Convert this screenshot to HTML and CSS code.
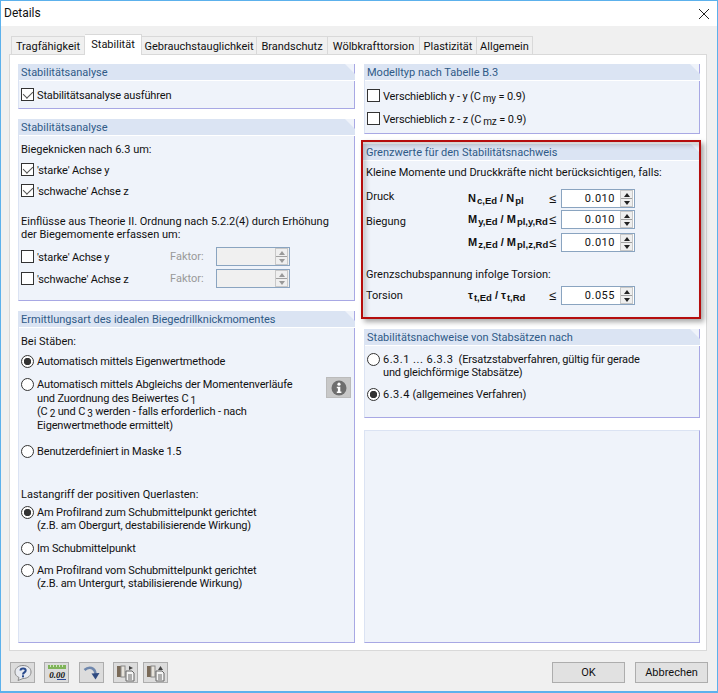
FILE: index.html
```html
<!DOCTYPE html>
<html lang="de">
<head>
    <meta charset="UTF-8">
    <meta name="viewport" content="width=device-width, initial-scale=1.0">
    <title>Details</title>
    <link rel="stylesheet" href="styles.css">
</head>
<body>
    <div class="window">
        <div class="titlebar">
            <span>Details</span>
            <svg class="close-icon" width="12" height="12" viewBox="0 0 12 12"><path d="M1 1 L11 11 M11 1 L1 11" stroke="#222" stroke-width="1" fill="none"/></svg>
        </div>

        <div class="tabs">
            <div class="tab">Tragfähigkeit</div>
            <div class="tab active">Stabilität</div>
            <div class="tab">Gebrauchstauglichkeit</div>
            <div class="tab">Brandschutz</div>
            <div class="tab">Wölbkrafttorsion</div>
            <div class="tab">Plastizität</div>
            <div class="tab">Allgemein</div>
        </div>

        <div class="tab-page">
            <div class="column column-left">
                <section class="card card-run">
                    <h3>Stabilitätsanalyse</h3>
                    <div class="card-body">
                        <label class="opt"><input type="checkbox" checked><span>Stabilitätsanalyse ausführen</span></label>
                    </div>
                </section>

                <section class="card card-buckling">
                    <h3>Stabilitätsanalyse</h3>
                    <div class="card-body">
                        <p class="text t-buckling">Biegeknicken nach 6.3 um:</p>
                        <label class="opt o-strong"><input type="checkbox" checked><span>'starke' Achse y</span></label>
                        <label class="opt o-weak"><input type="checkbox" checked><span>'schwache' Achse z</span></label>
                        <p class="text t-theory">Einflüsse aus Theorie II. Ordnung nach 5.2.2(4) durch Erhöhung<br>der Biegemomente erfassen um:</p>
                        <div class="factor-row f-first">
                            <label class="opt"><input type="checkbox"><span>'starke' Achse y</span></label>
                            <span class="factor-label">Faktor:</span>
                            <div class="spin disabled"><span class="spin-value"></span><div class="spin-btns"><i class="up"></i><i class="down"></i></div></div>
                        </div>
                        <div class="factor-row f-second">
                            <label class="opt"><input type="checkbox"><span>'schwache' Achse z</span></label>
                            <span class="factor-label">Faktor:</span>
                            <div class="spin disabled"><span class="spin-value"></span><div class="spin-btns"><i class="up"></i><i class="down"></i></div></div>
                        </div>
                    </div>
                </section>

                <section class="card card-moment">
                    <h3>Ermittlungsart des idealen Biegedrillknickmomentes</h3>
                    <div class="card-body">
                        <p class="text t-bars">Bei Stäben:</p>
                        <label class="opt o-auto"><input type="radio" name="moment" checked><span>Automatisch mittels Eigenwertmethode</span></label>
                        <div class="info-row">
                            <label class="opt o-abgleich"><input type="radio" name="moment"><span>Automatisch mittels Abgleichs der Momentenverläufe<br>und Zuordnung des Beiwertes C<sub>1</sub><br>(C<sub>2</sub> und C<sub>3</sub> werden - falls erforderlich - nach<br>Eigenwertmethode ermittelt)</span></label>
                            <button class="info-btn"><svg width="16" height="16" viewBox="0 0 16 16"><circle cx="8" cy="8" r="7.5" fill="#6e6e6e"/><circle cx="8" cy="4.2" r="1.6" fill="#fff"/><path d="M5.8 6.8 H9.3 V11.6 H10.4 V13 H5.8 V11.6 H6.9 V8.2 H5.8 Z" fill="#fff"/></svg></button>
                        </div>
                        <label class="opt o-user"><input type="radio" name="moment"><span>Benutzerdefiniert in Maske 1.5</span></label>
                        <p class="text t-load">Lastangriff der positiven Querlasten:</p>
                        <label class="opt o-top"><input type="radio" name="load" checked><span>Am Profilrand zum Schubmittelpunkt gerichtet<br>(z.B. am Obergurt, destabilisierende Wirkung)</span></label>
                        <label class="opt o-centre"><input type="radio" name="load"><span>Im Schubmittelpunkt</span></label>
                        <label class="opt o-bottom"><input type="radio" name="load"><span>Am Profilrand vom Schubmittelpunkt gerichtet<br>(z.B. am Untergurt, stabilisierende Wirkung)</span></label>
                    </div>
                </section>
            </div>

            <div class="column column-right">
                <section class="card card-model">
                    <h3>Modelltyp nach Tabelle B.3</h3>
                    <div class="card-body">
                        <label class="opt o-my"><input type="checkbox"><span>Verschieblich y - y (C<sub>my</sub> = 0.9)</span></label>
                        <label class="opt o-mz"><input type="checkbox"><span>Verschieblich z - z (C<sub>mz</sub> = 0.9)</span></label>
                    </div>
                </section>

                <section class="card card-limits">
                    <h3>Grenzwerte für den Stabilitätsnachweis</h3>
                    <div class="card-body">
                        <p class="text t-small">Kleine Momente und Druckkräfte nicht berücksichtigen, falls:</p>
                        <div class="limits l-first">
                            <span class="l-druck">Druck</span>
                            <span class="formula">N<sub>c,Ed</sub> / N<sub>pl</sub></span>
                            <span class="leq">≤</span>
                            <div class="spin"><span class="spin-value">0.010</span><div class="spin-btns"><i class="up"></i><i class="down"></i></div></div>

                            <span class="l-biegung">Biegung</span>
                            <span class="formula">M<sub>y,Ed</sub> / M<sub>pl,y,Rd</sub></span>
                            <span class="leq">≤</span>
                            <div class="spin"><span class="spin-value">0.010</span><div class="spin-btns"><i class="up"></i><i class="down"></i></div></div>

                            <span></span>
                            <span class="formula">M<sub>z,Ed</sub> / M<sub>pl,z,Rd</sub></span>
                            <span class="leq">≤</span>
                            <div class="spin"><span class="spin-value">0.010</span><div class="spin-btns"><i class="up"></i><i class="down"></i></div></div>
                        </div>
                        <p class="text t-shear">Grenzschubspannung infolge Torsion:</p>
                        <div class="limits l-torsion">
                            <span>Torsion</span>
                            <span class="formula">τ<sub>t,Ed</sub> / τ<sub>t,Rd</sub></span>
                            <span class="leq">≤</span>
                            <div class="spin"><span class="spin-value">0.055</span><div class="spin-btns"><i class="up"></i><i class="down"></i></div></div>
                        </div>
                    </div>
                    <div class="red-frame"></div>
                </section>

                <section class="card card-sets">
                    <h3>Stabilitätsnachweise von Stabsätzen nach</h3>
                    <div class="card-body">
                        <label class="opt o-sets1"><input type="radio" name="sets"><span><b class="nums">6.3.1 ... 6.3.3</b>&nbsp; (Ersatzstabverfahren, gültig für gerade<br>und gleichförmige Stabsätze)</span></label>
                        <label class="opt o-sets2"><input type="radio" name="sets" checked><span><b class="nums">6.3.4</b> (allgemeines Verfahren)</span></label>
                    </div>
                </section>

                <section class="card card-empty"></section>
            </div>
        </div>

        <div class="footer">
            <div class="tool-btns">
                <button class="tool-btn"><svg width="20" height="18" viewBox="0 0 20 18"><path d="M10 1.5 C15 1.5 18 4.5 18 8 C18 11.5 15 14.5 10 14.5 L5 16.5 L6 13.5 C3.5 12.5 2 10.5 2 8 C2 4.5 5 1.5 10 1.5 Z" fill="#e8ebf1" stroke="#8a8a8a"/><path d="M7.5 6.5 C7.5 3.8 12.7 3.8 12.7 6.5 C12.7 8.5 10 8.3 10 10.5" stroke="#2a4a8c" stroke-width="2" fill="none"/><rect x="9" y="11.3" width="2" height="2" fill="#2a4a8c"/></svg></button>
                <button class="tool-btn"><svg width="22" height="18" viewBox="0 0 22 18"><rect x="2" y="1" width="18" height="4" fill="#7fb35a"/><path d="M4.5 1 V3 M7.5 1 V3 M10.5 1 V3 M13.5 1 V3 M16.5 1 V3" stroke="#cfe8bd"/><text x="11" y="13.5" class="icon-text">0.00</text><path d="M11 15.5 H20" stroke="#2a4a9c"/></svg></button>
                <button class="tool-btn tool-third"><svg width="18" height="18" viewBox="0 0 18 18"><path d="M1.5 6 C6 2 12 3.5 12.5 10" stroke="#6f87ad" stroke-width="2.6" fill="none"/><path d="M8.5 9.5 L16.5 9 L12.5 15.5 Z" fill="#2f4a80"/></svg></button>
                <button class="tool-btn"><svg width="20" height="18" viewBox="0 0 20 18"><rect x="1" y="2" width="4" height="11" fill="#7a6a58"/><rect x="5" y="2" width="4" height="11" fill="#e8e4dc" stroke="#888"/><path d="M10 7 H16 L18 9 V17 H10 Z" fill="#f4f4f4" stroke="#666"/><path d="M12 11 H16 M12 13 H16 M12 15 H16" stroke="#666"/><path d="M13 2 L17 4 L13 6 Z" fill="#444"/></svg></button>
                <button class="tool-btn tool-last"><svg width="20" height="18" viewBox="0 0 20 18"><rect x="1" y="2" width="4" height="11" fill="#7a6a58"/><rect x="5" y="2" width="4" height="11" fill="#e8e4dc" stroke="#888"/><path d="M10 7 H16 L18 9 V17 H10 Z" fill="#f4f4f4" stroke="#666"/><path d="M12 11 H16 M12 13 H16 M12 15 H16" stroke="#666"/><path d="M12 6 L14.5 2 L17 6 Z" fill="#444"/></svg></button>
            </div>
            <div class="dialog-btns">
                <button class="dialog-btn">OK</button>
                <button class="dialog-btn">Abbrechen</button>
            </div>
        </div>
    </div>
</body>
</html>
```

FILE: styles.css
```css
* {
    margin: 0;
    padding: 0;
    box-sizing: border-box;
}

body {
    width: 718px;
    height: 693px;
    overflow: hidden;
    font-family: Roboto, "Noto Sans", sans-serif;
    font-size: 11px;
    line-height: 13px;
    color: #111;
}

.window {
    width: 718px;
    height: 693px;
    background: #f0f0f0;
    border: 1px solid #5cb1ec;
    border-width: 1px 1px 2px 1px;
    display: flex;
    flex-direction: column;
}

.titlebar {
    height: 25px;
    flex: none;
    background: #fff;
    display: flex;
    align-items: center;
    justify-content: space-between;
    padding: 0 7px 0 3px;
    font-size: 12px;
}

.tabs {
    display: grid;
    grid-template-columns: 74px 57px 115px 71px 92px 57px 56px;
    height: 28px;
    flex: none;
    align-items: end;
    padding-left: 10px;
    position: relative;
    z-index: 1;
}

.tab {
    height: 18px;
    background: #f0f0f0;
    border: 1px solid #d9d9d9;
    border-left: none;
    border-bottom: none;
    text-align: center;
    white-space: nowrap;
    line-height: 19px;
}

.tab:first-child {
    border-left: 1px solid #d9d9d9;
}

.tab.active {
    height: 21px;
    background: #fff;
    margin-bottom: -1px;
    line-height: 19px;
}

.tab-page {
    width: 698px;
    height: 597px;
    margin-left: 8px;
    background: #fff;
    border: 1px solid #d9d9d9;
    padding: 9px 6px 7px 8px;
    display: flex;
    gap: 9px;
    flex: none;
}

.column {
    display: flex;
    flex-direction: column;
    flex: none;
}

.column-left {
    width: 337px;
}

.column-right {
    width: 336px;
}

.card {
    background: #eff3fa;
    border: 1px solid #dbe3f3;
    border-top: none;
    border-right-color: #a8a8e4;
    border-bottom-color: #a8a8e4;
    position: relative;
}

.card h3 {
    font-weight: 400;
    font-size: 11px;
    line-height: 17px;
    height: 16px;
    margin: 0 -1px 0 -1px;
    padding-left: 3px;
    color: #2f5a87;
    background: #dbe4f3;
    clip-path: polygon(0 0, calc(100% - 10px) 0, 100% 10px, 100% 100%, 0 100%);
}

.card-body {
    padding: 0 2px;
    border-top: 1px solid #fff;
    display: flex;
    flex-direction: column;
    align-items: flex-start;
    margin-right: -1px;
}

.text {
    white-space: nowrap;
}

sub {
    font-size: 10px;
    line-height: 0;
    vertical-align: -2px;
    margin-left: 2px;
}

.opt {
    display: flex;
    align-items: flex-start;
    white-space: nowrap;
}

.opt input {
    appearance: none;
    -webkit-appearance: none;
    flex: none;
    width: 13px;
    height: 13px;
    background: #fff;
    border: 1px solid #333;
    margin-right: 3px;
    position: relative;
}

.opt input[type="checkbox"]:checked::after {
    content: "";
    position: absolute;
    left: 3px;
    top: 0;
    width: 5px;
    height: 8px;
    border: solid #555;
    border-width: 0 1.5px 1.5px 0;
    transform: rotate(45deg);
}

.opt input[type="radio"] {
    border-radius: 50%;
}

.opt input[type="radio"]:checked {
    background: radial-gradient(circle, #333 0, #333 3.4px, #fff 4px);
}

.opt span {
    display: block;
    letter-spacing: -0.15px;
}

.opt input[type="checkbox"] + span {
    margin: 1px 0 -1px;
}

.nums {
    font-weight: 400;
    letter-spacing: 0.5px;
}

/* left column */

.card-run {
    height: 45px;
}

.card-run .opt {
    margin-top: 7px;
}

.card-buckling {
    height: 182px;
    margin-top: 10px;
}

.t-buckling {
    margin-top: 7px;
}

.o-strong {
    margin-top: 7px;
}

.o-weak {
    margin-top: 8px;
}

.t-theory {
    margin-top: 18px;
}

.factor-row {
    width: 100%;
    display: flex;
    align-items: center;
}

.factor-row .opt {
    width: 149px;
}

.factor-label {
    color: #999;
    width: 46px;
}

.f-first {
    margin-top: 6px;
}

.f-second {
    margin-top: 3px;
}

.card-moment {
    height: 332px;
    margin-top: 10px;
}

.t-bars {
    margin-top: 7px;
}

.o-auto {
    margin-top: 7px;
}

.info-row {
    width: 100%;
    margin-top: 10px;
    display: flex;
    justify-content: space-between;
    align-items: flex-start;
}

.o-abgleich {
    line-height: 13.7px;
}

.info-btn {
    width: 25px;
    height: 21px;
    margin-top: -1px;
    margin-right: 2px;
    background: #c8c8c8;
    border: 1px solid #bbb;
    display: flex;
    align-items: center;
    justify-content: center;
}

.o-user {
    margin-top: 12px;
}

.t-load {
    margin-top: 30px;
}

.o-top {
    margin-top: 5px;
}

.o-centre {
    margin-top: 10px;
}

.o-bottom {
    margin-top: 9px;
}

/* right column */

.card-model {
    height: 70px;
}

.o-my {
    margin-top: 8px;
}

.o-mz {
    margin-top: 10px;
}

.card-limits {
    height: 175px;
    margin-top: 10px;
    border: none;
}

.red-frame {
    position: absolute;
    left: -3px;
    right: -1px;
    top: -4px;
    bottom: 0;
    border: 2px solid #b50d0d;
    box-shadow: 3px 3px 5px rgba(0, 0, 0, 0.35), inset 3px 3px 5px rgba(0, 0, 0, 0.2);
    pointer-events: none;
}

.t-small {
    margin-top: 5px;
}

.limits {
    display: grid;
    grid-template-columns: 102px 81px 12px 74px;
    width: 100%;
    align-items: end;
}

.limits > span {
    margin-bottom: 3px;
}

.limits > .l-druck {
    margin-bottom: 5px;
}

.limits > .l-biegung {
    margin-bottom: 1px;
}

.l-first {
    margin-top: 10px;
    grid-template-rows: 19px 21px 23px;
}

.t-shear {
    margin-top: 16px;
}

.l-torsion {
    margin-top: 5px;
}

.formula {
    font-family: "Liberation Sans", Arial, sans-serif;
    font-weight: 700;
    font-size: 11px;
    white-space: nowrap;
}

.formula sub {
    font-size: 9.5px;
    margin-left: 1px;
}

.leq {
    font-family: "Liberation Sans", Arial, sans-serif;
    font-size: 13px;
}

.spin {
    width: 74px;
    height: 19px;
    display: flex;
    align-items: center;
    justify-content: space-between;
    background: #fff;
    border: 1px solid #8aa4c0;
    padding-left: 2px;
}

.spin-value {
    flex: 1;
    text-align: right;
    padding-right: 5px;
    letter-spacing: 0.5px;
}

.spin-btns {
    width: 13px;
    height: 17px;
    margin-right: 1px;
    display: flex;
    flex-direction: column;
    border: 1px solid #c8c8c8;
}

.spin-btns i {
    flex: 1;
    background: #efefef;
    display: flex;
    align-items: center;
    justify-content: center;
}

.spin-btns .up {
    border-bottom: 1px solid #a0a0a0;
}

.spin-btns i::after {
    content: "";
    border-left: 3.5px solid transparent;
    border-right: 3.5px solid transparent;
}

.spin-btns .up::after {
    border-bottom: 4px solid #222;
}

.spin-btns .down::after {
    border-top: 4px solid #222;
}

.spin.disabled {
    background: #f0f0f0;
}

.spin.disabled .spin-btns .up::after {
    border-bottom-color: #999;
}

.spin.disabled .spin-btns .down::after {
    border-top-color: #999;
}

.card-sets {
    height: 89px;
    margin-top: 10px;
}

.o-sets1 {
    margin-top: 7px;
}

.o-sets2 {
    margin-top: 9px;
}

.card-empty {
    height: 213px;
    margin-top: 12px;
    border-top: 1px solid #dbe3f3;
}

/* footer */

.footer {
    flex: 1;
    display: flex;
    justify-content: space-between;
    padding: 11px 9px 0 9px;
}

.tool-btns {
    display: flex;
    gap: 9px;
}

.tool-btn {
    width: 25px;
    height: 21px;
    background: #dcdcdc;
    border: 1px solid #adadad;
    display: flex;
    align-items: center;
    justify-content: center;
}

.tool-third {
    margin-left: 1px;
}

.tool-last {
    margin-left: -4px;
}

.icon-text {
    font-family: "Liberation Serif", serif;
    font-style: italic;
    font-weight: 700;
    font-size: 9px;
    text-anchor: middle;
    fill: #111;
}

.dialog-btns {
    display: flex;
    gap: 10px;
}

.dialog-btn {
    width: 73px;
    height: 21px;
    background: #e1e1e1;
    border: 1px solid #adadad;
    font-family: inherit;
    font-size: 11px;
    color: #111;
}
```
